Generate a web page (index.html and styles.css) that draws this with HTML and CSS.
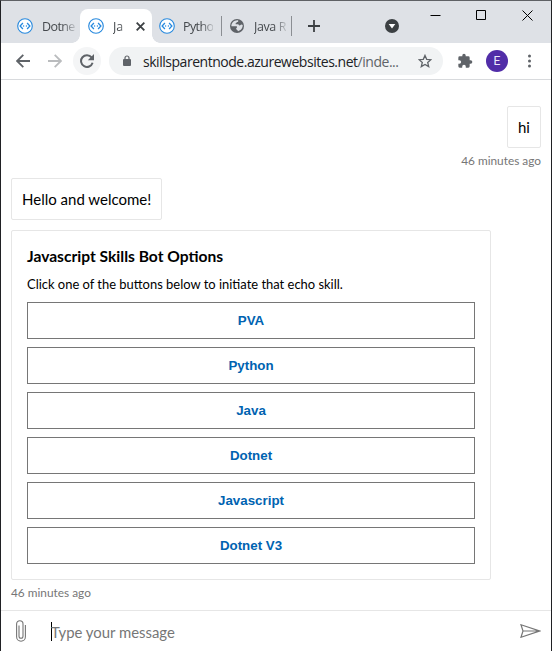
FILE: index.html
```html
<!DOCTYPE html>
<html lang="en">
<head>
<meta charset="utf-8">
<title>Javascript Skills Bot</title>
<link rel="stylesheet" href="styles.css">
</head>
<body>
<svg width="0" height="0" class="defs"><defs>
<symbol id="bot" viewBox="0 0 16 16"><circle cx="8" cy="8" r="7.3" fill="#fff" stroke="#2789de" stroke-width="1.1"/><path d="M5.900 5 3.100 8l2.800 3M10.100 5 12.900 8l-2.800 3" fill="none" stroke="#2789de" stroke-width="1.3"/><circle cx="6.600" cy="8" r=".7" fill="#2789de"/><circle cx="9.400" cy="8" r=".7" fill="#2789de"/></symbol>
</defs></svg>
<div class="window">
  <header class="tabbar">
    <div class="tab first"><svg class="fav"><use href="#bot"/></svg><span class="label fade">Dotne</span></div>
    <div class="tab active"><svg class="fav"><use href="#bot"/></svg><span class="label fade">Ja</span><svg class="x" viewBox="0 0 8 8"><path d="M.6.6l6.800 6.800M7.400.6.6 7.400" stroke="#3c4043" stroke-width="1.600"/></svg></div>
    <div class="tab third"><svg class="fav"><use href="#bot"/></svg><span class="label fade">Pytho</span></div>
    <i class="sep"></i>
    <div class="tab fourth"><svg class="globe" viewBox="0 0 14 14"><circle cx="7" cy="7" r="7" fill="#5f6368"/><path d="M8.2 1.4c.3 1-.2 1.400-1 1.700-.8.2-.5 1-1.300 1.200-.6.1-.5.7 0 .9h2.200c.8.2.7 1.200 1.500 1.300 1 .1.9-1 1.800-1 .5 0 .9.2 1.300.5.2 2.800-1.800 5.500-4.700 6.200l-.7-1.300c-.8-.2-1.200-.8-1.100-1.600.1-.8.9-.7.9-1.400C7 7 6 7.200 5.100 7.200H1.400C1.300 4.100 4.200.9 8.200 1.400z" fill="#dee1e6"/></svg><span class="label fade">Java R</span></div>
    <i class="sep"></i>
    <svg class="plus" viewBox="0 0 12 12"><path d="M6 0v12M0 6h12" stroke="#3c4043" stroke-width="1.8"/></svg>
    <svg class="down" viewBox="0 0 14 14"><circle cx="7" cy="7" r="7" fill="#3c4043"/><path d="M3.700 5h6.600L7 9.400z" fill="#fff"/></svg>
    <div class="controls">
      <svg viewBox="0 0 11 11"><path d="M.5 5.500h10" stroke="#000"/></svg>
      <svg viewBox="0 0 11 11"><path d="M.5.5h9v9h-9z" fill="none" stroke="#000"/></svg>
      <svg viewBox="0 0 11 11"><path d="M.5.5l10 10M10.500.5l-10 10" stroke="#000"/></svg>
    </div>
  </header>
  <nav class="toolbar">
    <svg class="arrow" viewBox="0 0 14 14"><path d="M14 7H1.500M7.300.8 1.100 7l6.200 6.200" fill="none" stroke="#5f6368" stroke-width="1.8"/></svg>
    <svg class="arrow forward" viewBox="0 0 14 14"><path d="M0 7h12.500M6.700.8 12.900 7l-6.200 6.200" fill="none" stroke="#babcbe" stroke-width="1.8"/></svg>
    <span class="reload"><svg viewBox="0 0 14 14"><path d="M11.600 3.400A5.900 5.900 0 1 0 12.600 8.800" fill="none" stroke="#5f6368" stroke-width="2"/><path d="M14 0v6.200H7.800z" fill="#5f6368"/></svg></span>
    <div class="address">
      <svg class="lock" viewBox="0 0 8 11"><path d="M2 4.500V3a2 2 0 0 1 4 0v1.500" fill="none" stroke="#5f6368" stroke-width="1.2"/><rect y="4" width="8" height="7" rx="1" fill="#5f6368"/></svg>
      <span class="url">skillsparentnode.azurewebsites.net<span>/inde...</span></span>
      <svg class="star" viewBox="0 0 14 14"><path d="M7 1.400 8.700 5.300l4.200.4-3.200 2.800 1 4.100L7 10.400l-3.700 2.200 1-4.100L1.100 5.700l4.200-.4z" fill="none" stroke="#5f6368" stroke-width="1.3"/></svg>
    </div>
    <svg class="puzzle" viewBox="0 0 24 24"><path d="M20.5 11H19V7a2 2 0 0 0-2-2h-4V3.500a2.500 2.500 0 0 0-5 0V5H4a2 2 0 0 0-2 2v3.800h1.500a2.700 2.700 0 0 1 0 5.400H2V20a2 2 0 0 0 2 2h3.800v-1.500a2.700 2.700 0 0 1 5.400 0V22H17a2 2 0 0 0 2-2v-4h1.500a2.500 2.500 0 0 0 0-5z" fill="#5f6368"/></svg>
    <span class="avatar">E</span>
    <svg class="dots" viewBox="0 0 4 14"><g fill="#5f6368"><circle cx="1.500" cy="2" r="1.500"/><circle cx="1.500" cy="7" r="1.500"/><circle cx="1.500" cy="12" r="1.500"/></g></svg>
  </nav>
  <main class="chat">
    <div class="bubble mine">hi</div>
    <div class="time mine"><span>46 minutes ago</span></div>
    <div class="bubble hello">Hello and welcome!</div>
    <section class="card">
      <h1><span>Javascript Skills Bot Options</span></h1>
      <p><span>Click one of the buttons below to initiate that echo skill.</span></p>
      <div class="actions">
        <button>PVA</button><button>Python</button><button>Java</button><button>Dotnet</button><button>Javascript</button><button>Dotnet V3</button>
      </div>
    </section>
    <div class="time"><span>46 minutes ago</span></div>
  </main>
  <footer class="send">
    <svg class="clip" viewBox="0 0 10 22"><path d="M9.400 5v11.800a4.400 4.400 0 0 1-8.800 0V3.900a3.200 3.200 0 0 1 6.400 0v12.400a2 2 0 0 1-4 0V5.500" fill="none" stroke="#767676" stroke-width="1.100"/></svg>
    <i class="caret"></i><span class="placeholder">Type your message</span>
    <svg class="plane" viewBox="0 0 21 14"><path d="M1 .8 19.500 7 1 13.200 3 7zM3 7h16" fill="none" stroke="#767676" stroke-width="1.200"/></svg>
  </footer>
</div>
</body>
</html>
```
FILE: styles.css
```css
* { box-sizing: border-box; }
body { margin: 0; background: #fff; overflow: hidden; }
svg { display: block; flex: none; }
.defs { position: absolute; }
.window { width: 552px; height: 651px; border: solid #202124; border-width: 1px 1px 0; border-top-color: #5f6165; display: flex; flex-direction: column; }
.tabbar { height: 42px; background: #dee1e6; display: flex; align-items: center; padding: 8px 0 0; font: 12.5px "Open Sans", sans-serif; color: #45494d; flex: none; }
.tab { display: flex; align-items: center; height: 34px; flex: none; }
.fav { width: 16px; height: 16px; }
.label { margin-left: 9px; white-space: nowrap; letter-spacing: -.6px; flex: none; }
.fade { -webkit-mask-image: linear-gradient(to right, #000 60%, rgba(0,0,0,.2)); mask-image: linear-gradient(to right, #000 60%, rgba(0,0,0,.2)); }
.first { width: 79px; padding-left: 16px; }
.active { width: 72px; background: #fff; border-radius: 8px 8px 0 0; padding-left: 8px; position: relative; }
.active::before, .active::after { content: ""; position: absolute; bottom: 0; width: 8px; height: 8px; }
.active::before { left: -8px; background: radial-gradient(circle at 0 0, transparent 7.5px, #fff 8px); }
.active::after { right: -8px; background: radial-gradient(circle at 100% 0, transparent 7.5px, #fff 8px); }
.active .label { width: 12px; margin-left: 9px; letter-spacing: -.2px; }
.x { width: 9px; height: 9px; margin-left: 11px; }
.third { width: 69px; padding-left: 7px; }
.third .label { margin-left: 8px; }
.sep { width: 1px; height: 20px; background: #8b8e93; flex: none; }
.fourth { width: 69px; padding-left: 8px; }
.globe, .down { width: 14px; height: 14px; }
.fourth .label { margin-left: 10px; letter-spacing: -.4px; }
.plus { width: 12px; height: 12px; margin-left: 16px; }
.down { margin-left: 65px; }
.controls { display: flex; gap: 35px; margin: 1px 0 0 31px; align-self: flex-start; }
.controls svg { width: 11px; height: 11px; }
.toolbar { height: 37px; border-bottom: 1px solid #d8dadd; display: flex; align-items: center; padding-left: 15px; flex: none; }
.arrow { width: 14px; height: 14px; }
.forward { margin-left: 18px; }
.reload { width: 28px; height: 28px; border-radius: 50%; background: #f4f5f6; display: grid; place-items: center; margin-left: 11px; }
.reload svg { width: 14px; height: 14px; }
.address { width: 334px; height: 28px; margin-left: 8px; border-radius: 14px; background: #f1f3f4; display: flex; align-items: center; padding: 0 11px 0 14px; }
.lock { width: 8px; height: 11px; margin-bottom: 1px; }
.url { margin-left: 12px; font: 14px "Open Sans", sans-serif; letter-spacing: -.47px; color: #202124; white-space: nowrap; }
.url span { color: #5f6368; }
.star { width: 14px; height: 14px; margin-left: auto; }
.puzzle { width: 16px; height: 16px; margin-left: 14px; }
.avatar { width: 22px; height: 22px; border-radius: 50%; background: #512da8; color: #eee8fb; display: grid; place-items: center; font: 12px Roboto, sans-serif; margin-left: 13px; }
.dots { width: 4px; height: 14px; margin-left: 20px; }
.chat { height: 530px; padding: 26px 10px 0; font-family: Lato, sans-serif; color: #000; display: flex; flex-direction: column; align-items: flex-start; flex: none; }
.bubble { height: 42px; border: 1px solid #e6e6e6; border-radius: 2px; padding: 0 10px; font-size: 15px; line-height: 40px; white-space: nowrap; }
.mine { align-self: flex-end; }
.bubble.mine { width: 34px; }
.hello { width: 151px; margin-top: 4px; }
.time { height: 26px; line-height: 26px; font-size: 11.85px; color: #767676; }
.card { width: 480px; height: 350px; border: 1px solid #e6e6e6; border-radius: 2px; margin-top: 10px; padding: 15px; }
h1 { margin: -1px 0 0; font-size: 15.6px; line-height: 22px; height: 22px; font-weight: 700; white-space: nowrap; }
p { margin: 6px 0 0; font-size: 12.95px; line-height: 22px; height: 22px; white-space: nowrap; }
.actions { display: flex; flex-direction: column; gap: 8px; margin-top: 7px; }
button { height: 37px; border: 1px solid #767676; background: #fff; color: #0063b1; font: bold 13.33px "Liberation Sans", sans-serif; padding: 0; }
.send { height: 40px; flex: none; border-top: 1px solid #e6e6e6; display: flex; align-items: center; padding: 1px 10px 0 14px; font: 14.9px Lato, sans-serif; color: #767676; }
.clip { width: 12px; height: 22px; }
.caret { width: 1px; height: 19px; background: #000; margin-left: 24px; }
.placeholder { margin: 2px 0 0 -1px; }
.plane { width: 21px; height: 14px; margin-left: auto; }
```
